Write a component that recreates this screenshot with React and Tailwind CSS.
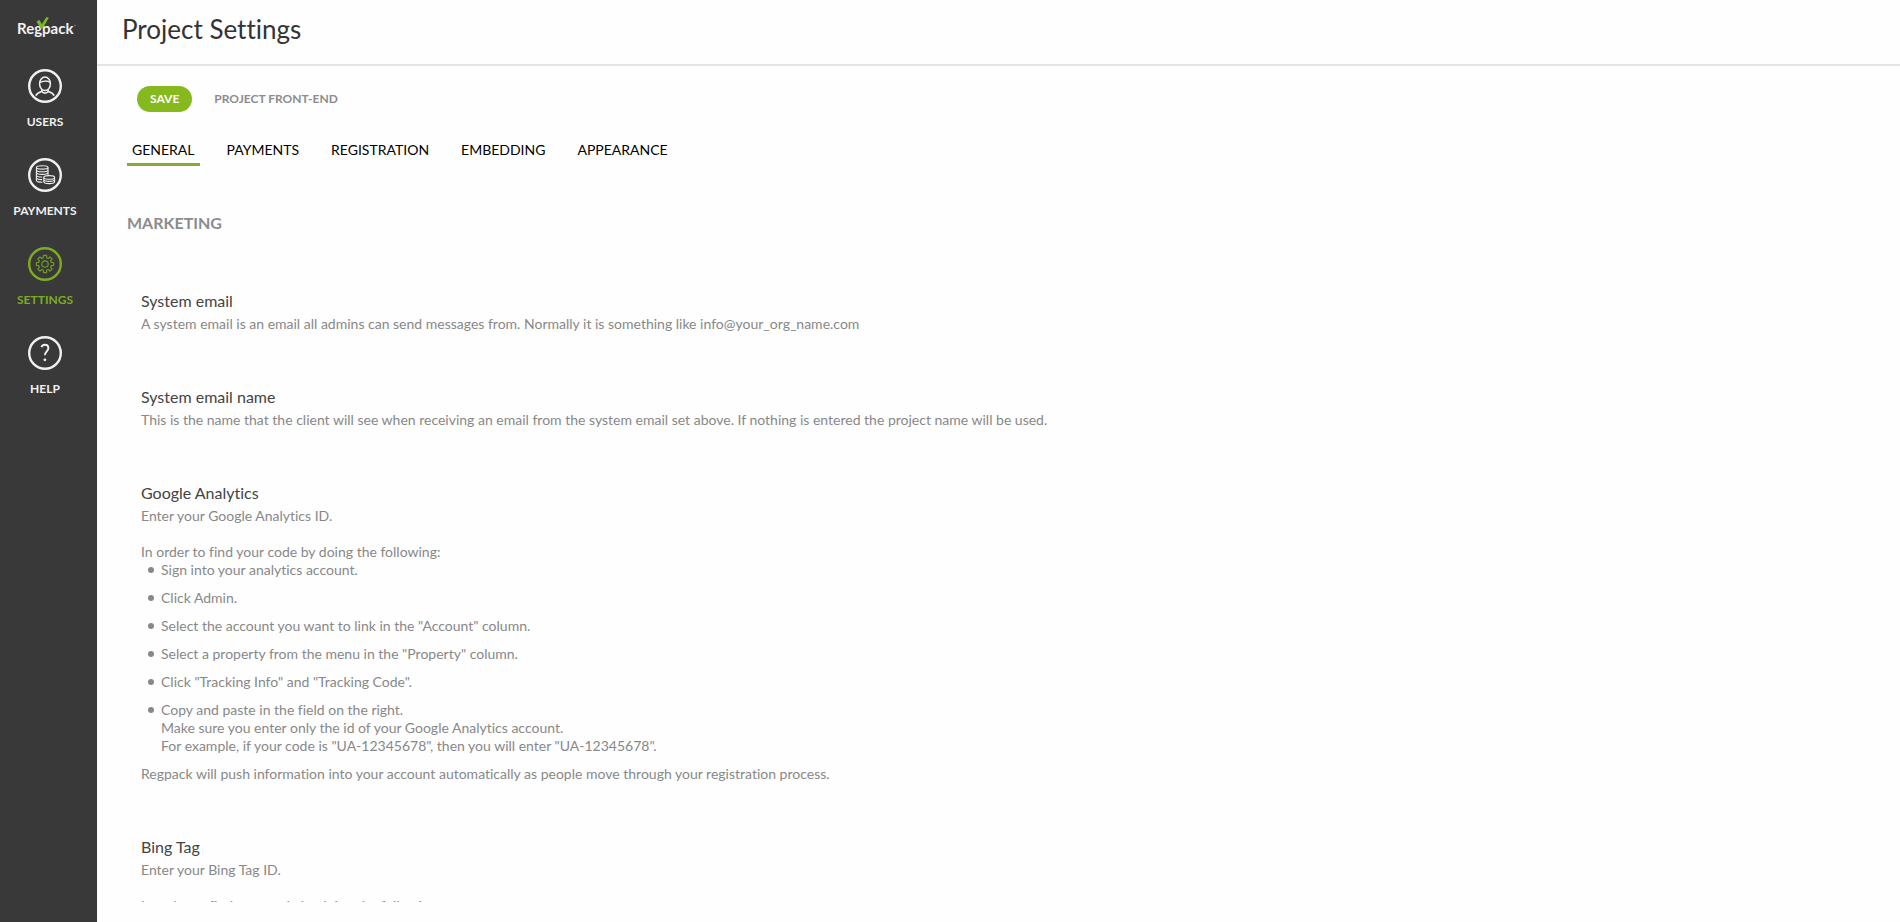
import React from "react";

const ring = "h-[34px] w-[34px]";

function UsersIcon() {
  return (
    <svg viewBox="0 0 34 34" className={ring} fill="none" stroke="currentColor" aria-hidden="true">
      <circle cx="17" cy="17" r="15.8" strokeWidth="2.4" />
      <ellipse cx="17" cy="14.8" rx="5.4" ry="6.8" strokeWidth="1.5" />
      <path d="M11.8 13.6c2.4-2 8-2.2 10.4 0" strokeWidth="1.3" />
      <path d="M13.8 20.4v2c-3 .8-4.8 1.8-6 4.2M20.2 20.4v2c3 .8 4.8 1.8 6 4.2M13.8 22.6c1.6 2 4.8 2 6.4 0" strokeWidth="1.6" />
    </svg>
  );
}

function PaymentsIcon() {
  return (
    <svg viewBox="0 0 34 34" className={ring} fill="none" stroke="currentColor" aria-hidden="true">
      <circle cx="17" cy="17" r="15.8" strokeWidth="2.4" />
      <g strokeWidth="1.1">
        <ellipse cx="14.2" cy="9.4" rx="5.8" ry="1.7" />
        <path d="M8.4 9.4v12.8c0 1.2 2.6 2 6 2M20 9.4v8" />
        <path d="M8.4 12c0 1.2 2.6 1.8 5.8 1.8s5.8-.6 5.8-1.8M8.4 14.6c0 1.2 2.6 1.8 5.8 1.8s5.8-.6 5.8-1.8M8.4 17.2c0 1.2 2.6 1.8 5.8 1.8M8.4 19.8c0 1.2 2.6 1.8 5.8 1.8" />
        <ellipse cx="21.2" cy="19.4" rx="5.4" ry="1.8" />
        <path d="M15.8 19.4v4.4c0 1.1 2.4 1.8 5.4 1.8s5.4-.7 5.4-1.8v-4.4M15.8 21.6c0 1.1 2.4 1.8 5.4 1.8s5.4-.7 5.4-1.8" />
      </g>
    </svg>
  );
}

// Outline of an eight-toothed gear centred in the 34-unit icon box.
const gearPoints = Array.from({ length: 8 }, (_, i) =>
  [
    [6.4, -15],
    [8.7, -10],
    [8.7, 10],
    [6.4, 15],
  ].map(([r, offset]) => {
    const a = ((i * 45 + offset) * Math.PI) / 180;
    return `${(17 + r * Math.cos(a)).toFixed(2)},${(17 + r * Math.sin(a)).toFixed(2)}`;
  })
)
  .flat()
  .join(" ");

function SettingsIcon() {
  return (
    <svg viewBox="0 0 34 34" className={ring} fill="none" stroke="currentColor" aria-hidden="true">
      <circle cx="17" cy="17" r="15.8" strokeWidth="2.4" />
      <g strokeWidth="1.2" strokeLinejoin="round" opacity="0.85">
        <circle cx="17" cy="17" r="3.2" />
        <polygon points={gearPoints} />
      </g>
    </svg>
  );
}

function HelpIcon() {
  return (
    <svg viewBox="0 0 34 34" className={ring} fill="none" stroke="currentColor" aria-hidden="true">
      <circle cx="17" cy="17" r="15.8" strokeWidth="2.4" />
      <path d="M13.4 11.2c.6-1.6 1.8-2.4 3.5-2.4 2.1 0 3.5 1.2 3.5 3.3 0 3.1-3.5 3.6-3.5 7.2" strokeWidth="1.9" />
      <circle cx="16.9" cy="23.8" r="1.4" fill="currentColor" stroke="none" />
    </svg>
  );
}

function Logo() {
  return (
    <a href="#home" aria-label="Regpack" className="block">
      <svg viewBox="0 0 62 24" className="h-6 w-[62px]" aria-hidden="true">
        <text x="3" y="18" fontFamily="Lato, sans-serif" fontWeight="700" fontSize="15" fill="#f2f2f2">
          Regpack
        </text>
        <path d="M22.5 5.4l3-1.4 2.4 4.2L32.4 1l2.4.8-6.2 10.6h-2z" fill="#7ab829" />
        <circle cx="61" cy="9.5" r="0.7" fill="#8a8a8a" />
      </svg>
    </a>
  );
}

const nav = [
  { label: "USERS", Icon: UsersIcon },
  { label: "PAYMENTS", Icon: PaymentsIcon },
  { label: "SETTINGS", Icon: SettingsIcon, active: true },
  { label: "HELP", Icon: HelpIcon },
];

const tabs = ["GENERAL", "PAYMENTS", "REGISTRATION", "EMBEDDING", "APPEARANCE"];

function Setting({ title, children }) {
  return (
    <section className="mb-[53px]">
      <h3 className="text-base leading-[22px] text-[#444444]">{title}</h3>
      <div className="pt-[3px] text-sm leading-[18px] text-[#888888]">{children}</div>
    </section>
  );
}

function Step({ children }) {
  return (
    <li className="flex gap-[7px]">
      <span className="mt-1.5 size-1.5 shrink-0 rounded-full bg-[#888888]" />
      <div>{children}</div>
    </li>
  );
}

export default function App() {
  return (
    <div className="flex h-screen bg-[#fefefe] font-['Lato',sans-serif] [font-variant-ligatures:none]">
      <aside className="w-[97px] shrink-0 bg-[#393939] pr-[7px]">
        <div className="flex justify-center pt-4">
          <Logo />
        </div>
        <nav className="mt-[29px] flex flex-col gap-[29px]">
          {nav.map(({ label, Icon, active }) => (
            <a
              key={label}
              href={"#" + label.toLowerCase()}
              aria-current={active ? "page" : undefined}
              className={
                active
                  ? "flex flex-col items-center gap-3 text-[#7cad1f]"
                  : "flex flex-col items-center gap-3 text-[#f0f0f0]"
              }
            >
              <Icon />
              <span className="text-xs leading-[14px] font-bold">{label}</span>
            </a>
          ))}
        </nav>
      </aside>

      <div className="flex min-w-0 flex-1 flex-col pb-5">
        <header className="h-[66px] shrink-0 border-b-2 border-[#e4e4e4] px-[25px] pt-[11px]">
          <h1 className="text-[26px] leading-9 text-[#333333]">Project Settings</h1>
        </header>

        <div className="flex items-center gap-[22px] pt-5 pl-10">
          <button className="h-[26px] rounded-full bg-[#86b91d] px-[13px] text-xs font-bold text-white">SAVE</button>
          <a href="#front-end" className="text-xs font-bold text-[#8c8c8c]">
            PROJECT FRONT-END
          </a>
        </div>

        <div role="tablist" className="mt-7 flex gap-[22px] pl-[30px]">
          {tabs.map((t, i) => (
            <button
              key={t}
              role="tab"
              aria-selected={i === 0}
              className={
                i === 0
                  ? "border-b-3 border-[#86ab34] px-[5px] pb-[3px] text-sm leading-5 text-black"
                  : "border-b-3 border-transparent px-[5px] pb-[3px] text-sm leading-5 text-black"
              }
            >
              {t}
            </button>
          ))}
        </div>

        <main className="min-h-0 flex-1 overflow-hidden pt-[47px] pl-[30px]">
          <h2 className="text-base leading-5 font-bold text-[#8c8c8c]">MARKETING</h2>
          <div className="pt-[57px] pl-3.5">
            <Setting title="System email">
              <p>
                A system email is an email all admins can send messages from. Normally it is something like
                info@your_org_name.com
              </p>
            </Setting>
            <Setting title="System email name">
              <p>
                This is the name that the client will see when receiving an email from the system email set above. If
                nothing is entered the project name will be used.
              </p>
            </Setting>
            <Setting title="Google Analytics">
              <p>Enter your Google Analytics ID.</p>
              <p className="mt-[18px]">In order to find your code by doing the following:</p>
              <ul className="space-y-2.5 pb-2.5 pl-[7px]">
                <Step>Sign into your analytics account.</Step>
                <Step>Click Admin.</Step>
                <Step>Select the account you want to link in the "Account" column.</Step>
                <Step>Select a property from the menu in the "Property" column.</Step>
                <Step>Click "Tracking Info" and "Tracking Code".</Step>
                <Step>
                  Copy and paste in the field on the right.
                  <br />
                  Make sure you enter only the id of your Google Analytics account.
                  <br />
                  For example, if your code is "UA-12345678", then you will enter "UA-12345678".
                </Step>
              </ul>
              <p>
                Regpack will push information into your account automatically as people move through your registration
                process.
              </p>
            </Setting>
            <Setting title="Bing Tag">
              <p>Enter your Bing Tag ID.</p>
              <p className="mt-[18px]">In order to find your code by doing the following:</p>
            </Setting>
          </div>
        </main>
      </div>
    </div>
  );
}
